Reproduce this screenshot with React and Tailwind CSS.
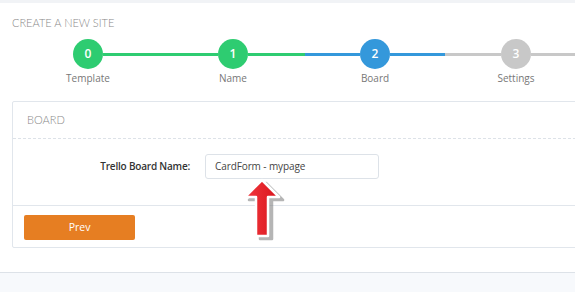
const steps = [
  { n: 0, label: "Template", w: "w-[146px]", circle: "bg-[#2ecc71]", left: null, right: "bg-[#2ecc71]" },
  { n: 1, label: "Name", w: "w-[144px]", circle: "bg-[#2ecc71]", left: "bg-[#2ecc71]", right: "bg-[#2ecc71]" },
  { n: 2, label: "Board", w: "w-[140px]", circle: "bg-[#3498db]", left: "bg-[#3498db]", right: "bg-[#3498db]" },
  { n: 3, label: "Settings", w: "w-[142px]", circle: "bg-[#c8c8c8]", left: "bg-[#c8c8c8]", right: "bg-[#c8c8c8]" },
];

const Step = ({ step }) => (
  <div className={`${step.w} shrink-0 flex flex-col items-center`}>
    <div className="flex w-full items-center">
      <div className={`h-[3px] flex-1 ${step.left || ""}`} />
      <div
        className={`w-[30px] h-[30px] rounded-full ${step.circle} text-white flex items-center justify-center text-[12px] font-semibold`}
      >
        {step.n}
      </div>
      <div className={`h-[3px] flex-1 ${step.right}`} />
    </div>
    <div className="mt-[2px] text-[10px] leading-[15px] text-[#777]">{step.label}</div>
  </div>
);

const RedArrow = () => (
  <svg
    className="absolute left-[240px] top-[176px]"
    width="48"
    height="68"
    viewBox="0 0 48 68"
  >
    <defs>
      <linearGradient id="ar" x1="0" y1="0" x2="1" y2="0">
        <stop offset="0" stopColor="#f2383e" />
        <stop offset="1" stopColor="#d8141c" />
      </linearGradient>
    </defs>
    <path
      d="M24 5 L41 22 L30 22 L30 61 L18 61 L18 22 L7 22 Z"
      fill="#7a7a7a"
      opacity="0.55"
      stroke="#7a7a7a"
      strokeWidth="2.5"
      strokeLinejoin="round"
      transform="translate(2 2)"
    />
    <path
      d="M22 4 L39 21 L28 21 L28 60 L16 60 L16 21 L5 21 Z"
      fill="url(#ar)"
      stroke="#fff"
      strokeWidth="2.5"
      strokeLinejoin="round"
    />
  </svg>
);

export default function App() {
  return (
    <div
      className="relative w-[575px] h-[292px] overflow-hidden bg-white"
      style={{ fontFamily: '"Open Sans", sans-serif' }}
    >
      <div className="h-[3px] bg-[#f1f3f6]" />

      <div className="pl-[12px]">
        <h1
          className="pt-[12px] text-[11px] leading-[16px] font-light text-[#888]"
          style={{ fontFamily: "Lato, sans-serif" }}
        >
          CREATE A NEW SITE
        </h1>

        <div className="mt-[8px] ml-[3px] flex">
          {steps.map((s) => (
            <Step key={s.n} step={s} />
          ))}
        </div>

        <div className="mt-[15px] w-[600px] border border-[#e1e6ec] rounded-[2px]">
          <div
            className="h-[37px] flex items-center px-[14px] border-b border-dashed border-[#dde2e8] text-[11px] font-light text-[#888]"
            style={{ fontFamily: "Lato, sans-serif" }}
          >
            BOARD
          </div>
          <div className="pt-[15px] pb-[26px] flex items-center">
            <label className="w-[192px] pr-[15px] text-right text-[10px] tracking-[-0.2px] font-semibold text-[#333]">
              Trello Board Name:
            </label>
            <div className="w-[174px] h-[25px] border border-[#dde2e8] rounded-[3px] flex items-center px-[9px] text-[10px] tracking-[-0.1px] text-[#444]">
              CardForm - mypage
            </div>
          </div>
          <div className="border-t border-[#e1e6ec] pt-[7px] pb-[7px] px-[11px]">
            <button className="w-[111px] h-[25px] rounded-[2px] bg-[#e67e22] text-white text-[10.5px]">
              Prev
            </button>
          </div>
        </div>
      </div>

      <div className="absolute left-0 right-0 top-[272px] bottom-0 border-t border-[#dde2e8] bg-[#f7f9fc]" />

      <RedArrow />
    </div>
  );
}
